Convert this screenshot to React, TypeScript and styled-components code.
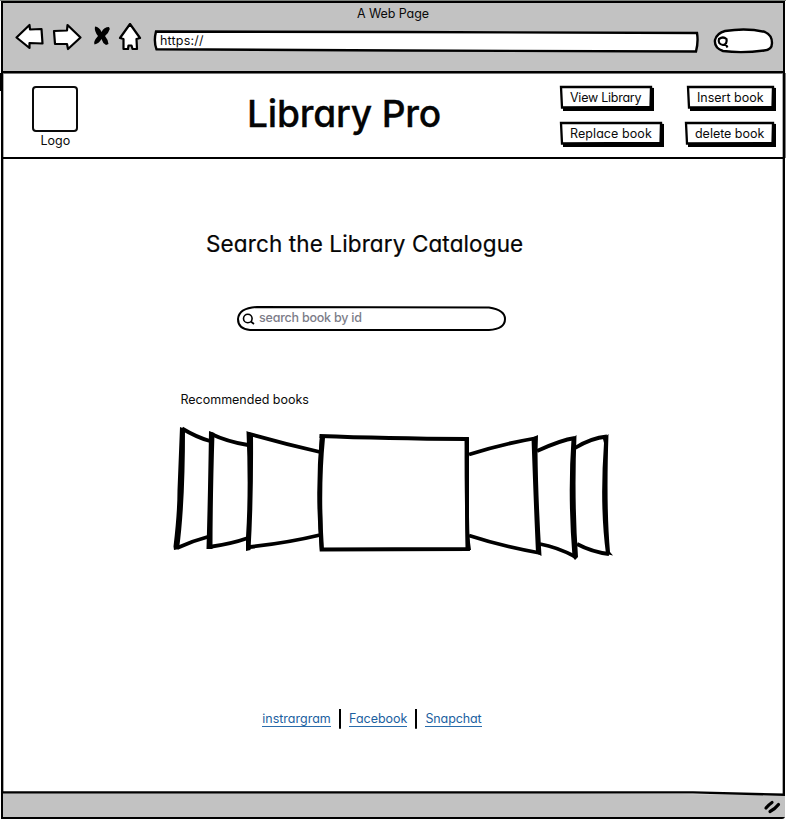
import React from 'react';
import styled, { createGlobalStyle } from 'styled-components';

const Global = createGlobalStyle`
  * { box-sizing: border-box; }
  body { margin: 0; background: #fff; }
  #root { font-family: Inter, 'Liberation Sans', sans-serif; font-feature-settings: 'cv11' 1; color: #0a0a0a; }
`;

const Screen = styled.div`
  width: 786px;
  height: 820px;
  padding: 1px;
  overflow: hidden;
  background: linear-gradient(#7d827d 1px, transparent 1px);
`;

const Window = styled.div`
  display: flex;
  flex-direction: column;
  width: 784px;
  height: 818px;
  border: 2px solid #000;
  border-radius: 0 0 3px 0;
  background: #fff;
  box-shadow: inset 0.5px 0 0 #555, inset -0.5px 0 0 #555;
`;

const Chrome = styled.header`
  height: 70px;
  background: #c2c2c2;
  border-bottom: 2px solid #000;
  box-shadow: 0 1px 0 #777;
`;

const Label = styled.span<{ $track?: number; $color?: string; $weight?: number }>`
  display: block;
  font-size: 12.5px;
  font-weight: ${p => p.$weight ?? 400};
  line-height: 15px;
  letter-spacing: ${p => p.$track ?? 0}px;
  color: ${p => p.$color ?? '#0a0a0a'};
  white-space: nowrap;
`;

const PageTitle = styled.div`
  display: flex;
  justify-content: center;
  height: 20px;
  padding-top: 3px;
`;

const Toolbar = styled.div`
  display: flex;
  align-items: flex-start;
  padding-left: 11px;
`;

const NavIcons = styled.svg`
  display: block;
  width: 130px;
  height: 34px;
  flex: none;
`;

const Sketched = styled.div<{ $w: number; $h: number }>`
  position: relative;
  width: ${p => p.$w}px;
  height: ${p => p.$h}px;
  flex: none;
`;

const Outline = styled.svg`
  position: absolute;
  inset: 0;
  width: 100%;
  height: 100%;
  overflow: visible;
`;

const Address = styled(Sketched)`
  margin: 6px 0 0 9px;
  padding: 4px 0 0 7px;
`;

const QuickSearch = styled(Sketched)`
  margin: 5px 0 0 13px;
`;

const Inner = styled.div`
  position: relative;
`;

const Header = styled.section`
  position: relative;
  display: flex;
  width: 782px;
  height: 86px;
  border-bottom: 2px solid #000;
`;

const HeaderEdges = styled.svg`
  position: absolute;
  left: -3px;
  top: -2px;
  width: 786px;
  height: 88px;
  pointer-events: none;
`;

const LogoBlock = styled.div`
  display: flex;
  flex-direction: column;
  align-items: center;
  width: 46px;
  margin: 13px 0 0 29.4px;
`;

const LogoBox = styled.div`
  width: 46px;
  height: 46px;
  margin-bottom: 1px;
  border: 2px solid #0a0a0a;
  border-radius: 4px;
`;

const Brand = styled.h1`
  width: 200px;
  margin: 18px 0 0 168.6px;
  font-size: 37.2px;
  font-weight: 500;
  line-height: 45px;
  letter-spacing: -0.2px;
  white-space: nowrap;
  color: #050505;
  -webkit-text-stroke: 0.3px #050505;
`;

const Actions = styled.nav`
  display: grid;
  grid-template-columns: 125px 93px;
  grid-template-rows: 36px 36px;
  margin: 12px 0 0 112px;
`;

const ActionButton = styled.button<{ $w: number; $shift: number }>`
  position: relative;
  width: ${p => p.$w}px;
  height: 26px;
  margin: 0 0 0 ${p => p.$shift}px;
  padding: 0 0 1px 11px;
  border: 0;
  background: none;
  font: inherit;
  text-align: left;
  display: block;
`;

const Content = styled.main`
  flex: 1;
  display: flex;
  flex-direction: column;
  align-items: flex-start;
`;

const Heading = styled.h2`
  margin: 71px 0 0 203px;
  font-size: 22.5px;
  font-weight: 400;
  line-height: 28px;
  letter-spacing: 0.12px;
  white-space: nowrap;
  color: #050505;
  -webkit-text-stroke: 0.2px #050505;
`;

const SearchField = styled(Sketched)`
  margin: 47px 0 0 233px;
  padding: 5px 0 0 23px;
`;

const Recommended = styled.div`
  margin: 61px 0 0 177.4px;
`;

const Carousel = styled.svg`
  display: block;
  width: 450px;
  height: 140px;
  margin: 13px 0 0 167px;
`;

const Links = styled.div`
  display: flex;
  align-items: flex-start;
  margin: 148px 0 0 259px;
`;

const Link = styled.a<{ $w: number; $track: number }>`
  width: ${p => p.$w}px;
  height: 16px;
  margin-top: 3px;
  font-size: 12.5px;
  line-height: 16px;
  letter-spacing: ${p => p.$track}px;
  color: #1c5f9f;
  border-bottom: 1px solid #2a6cab;
  text-align: center;
  white-space: nowrap;
  text-decoration: none;
`;

const Separator = styled.i`
  width: 2px;
  height: 20px;
  margin: 1px 8px 0;
  background: #000;
  border-radius: 0 0 1px 1px;
`;

const Footer = styled.footer`
  height: 26px;
`;

const FooterArt = styled.svg`
  display: block;
  width: 782px;
  height: 26px;
`;

function Action({ w, shift = 0, track, children }: { w: number; shift?: number; track: number; children: string }) {
  return (
    <ActionButton $w={w} $shift={shift}>
      <Outline>
        <path d={`M4 22 H${w - 4} V2.500 L${w} 3 V26 H4 Z`} fill="#000" />
        <path d={`M2 2 L${w - 3} 2 L${w - 3.5} 22 L3 22.5 Z`} fill="#fff" stroke="#000" strokeWidth="2.300" />
      </Outline>
      <Inner><Label $track={track}>{children}</Label></Inner>
    </ActionButton>
  );
}

export default function App() {
  return (
    <>
      <Global />
      <Screen>
        <Window>
          <Chrome>
            <PageTitle><Label $track={-0.1}>A Web Page</Label></PageTitle>
            <Toolbar>
              <NavIcons viewBox="14 23 130 34">
                <g fill="#fff" stroke="#000" strokeWidth="2.200" strokeLinejoin="round">
                  <path d="M16.5 37.5 L29.5 25 L30 29.5 L41.5 29 L42.5 43.5 L29.5 43 L29.5 48 Z" />
                  <path d="M54 31 L67 30.5 L67.5 25 L80.5 37.5 L68 49 L67 44 L55 44 Z" />
                  <path d="M130 24 L140 38 L136.5 39 L137 49 L132.5 49 L131.5 45.5 L128.5 45.5 L128 49 L123.5 49 L123.5 39 L120 38 Z" />
                </g>
                <path d="M95 26.500 Q99.500 27 101.500 32 Q104 27 109 27 L109.800 29 Q108.500 33.500 105 36 Q108 39.500 108.500 44 L106 45 Q102.500 43 101.500 39 Q99 43.500 94.500 44.500 Q93 41.500 98 36 Q94 31 95 26.500Z" fill="#000" />
              </NavIcons>
              <Address $w={545} $h={22}>
                <Outline viewBox="153 29 545 22">
                  <path d="M156 31.5 L400 32 L697 33 Q698.500 42 696 51.500 L400 50.500 L156.500 49.300 Q153.500 41 156 31.500Z" fill="#fff" stroke="#000" strokeWidth="2.400" />
                </Outline>
                <Inner><Label $track={0.2}>https://</Label></Inner>
              </Address>
              <QuickSearch $w={64} $h={28}>
                <Outline viewBox="711 28 64 28">
                  <path d="M725 31 Q747 27.500 765 32 Q772 35 772 43 Q772 50 764 50.500 Q742 53.500 723 51 Q714 48 715 40 Q717 33 725 31Z" fill="#fff" stroke="#000" strokeWidth="2.400" />
                  <path d="M719 39 Q723 36 726.500 39 Q727.500 44 723 45 Q717.500 44 719 39Z M725 43 L727.500 47.500" fill="none" stroke="#000" strokeWidth="2.200" />
                </Outline>
              </QuickSearch>
            </Toolbar>
          </Chrome>

          <Header>
            <HeaderEdges viewBox="0 71 786 88">
              <path d="M1 73 V91 M784.500 73 V158" fill="none" stroke="#000" strokeWidth="2" />
            </HeaderEdges>
            <LogoBlock>
              <LogoBox />
              <Label $track={0.05}>Logo</Label>
            </LogoBlock>
            <Brand>Library Pro</Brand>
            <Actions>
              <Action w={95} track={-0.25}>View Library</Action>
              <Action w={90} shift={2} track={0}>Insert book</Action>
              <Action w={105} track={0.08}>Replace book</Action>
              <Action w={92} track={-0.02}>delete book</Action>
            </Actions>
          </Header>

          <Content>
            <Heading>Search the Library Catalogue</Heading>
            <SearchField $w={271} $h={26}>
              <Outline viewBox="236 305 271 26">
                <path d="M257 307 L489 307.500 Q505 310 505 319 Q505 329 489 330 L250 330 Q238 329 238 319 Q239 308 257 307Z" fill="#fff" stroke="#000" strokeWidth="2" />
                <circle cx="247.800" cy="318.500" r="4.300" fill="none" stroke="#000" strokeWidth="1.600" />
                <path d="M250.800 321.500 L254 324" stroke="#000" strokeWidth="1.700" />
              </Outline>
              <Inner><Label $color="#7c7c88" $track={-0.22} $weight={500}>search book by id</Label></Inner>
            </SearchField>
            <Recommended><Label>Recommended books</Label></Recommended>
            <Carousel viewBox="170 420 450 140">
              <g fill="none" stroke="#000" strokeWidth="3.800">
                <path d="M182 428.500 Q197 437.500 210 441 M177 548 Q192 541 209 536.500" />
                <path d="M210 433.500 Q228 442 248 445 M209 547 Q231 544 248 538" />
                <path d="M248 433.500 Q285 444 320 452 M249 547 Q287 543 320 535" />
                <path d="M469 454.500 Q502 444 537 438 M469 535.500 Q501 546 540 553" />
                <path d="M537 451 Q561 440 575 438 M540 544 Q557 547 576 557" />
                <path d="M575 448 Q591 438 607 436.500 M577 544 Q592 552 609 554" />
              </g>
              <g fill="#000">
                <path d="M180 427 L185 429 Q185 505 179 549 L174 550 L173.500 546.500 Q177.500 513 177.500 490Z" />
                <path d="M209 431 L214.500 433 Q212.500 499 212.500 549 L206.500 549 Q208 498 209 431Z" />
                <path d="M246.500 431 L253 434 Q253.500 499 250.500 550 L246 551 L246 537 Q249 490 246.500 431Z" />
                <path d="M531.500 438 L538 435 L537.500 452 Q538 499 541.500 556 L536 553 Q534 510 531.500 438Z" />
                <path d="M571.500 439 L576.500 435 Q574 499 578 557 L575 560 L572.500 557 Q567.500 495 571.500 439Z" />
                <path d="M603 439 L608.500 434 Q606 506 610 552 L613 555.500 L606 554 Q599.500 506 604 443Z" />
              </g>
              <path d="M319.500 436 Q385 438.500 467 439 Q466 495 468 549 L321.500 549.500 Q318 488 322 436" fill="#fff" stroke="#000" strokeWidth="3.800" />
              <path d="M320 434 Q314.500 494 320 550.500 H324 Q320 490 325 438Z M464.500 438 H469 V535 L471 550 H465.500Z" fill="#000" />
            </Carousel>
            <Links>
              <Link $w={69} $track={0}>instrargram</Link><Separator />
              <Link $w={58} $track={0}>Facebook</Link><Separator />
              <Link $w={57} $track={-0.1}>Snapchat</Link>
            </Links>
          </Content>

          <Footer>
            <FooterArt viewBox="3 791 782 26">
              <path d="M2 792 L480 792.300 L786 795 V818 H2Z" fill="#c2c2c2" />
              <path d="M2 792.400 L693 792.400 L785 794.700" fill="none" stroke="#000" strokeWidth="2.400" />
              <path d="M766 808 Q769 804.500 772 802.500 M770 811.500 Q775 809 778.500 804.500" fill="none" stroke="#000" strokeWidth="3.200" strokeLinecap="round" />
            </FooterArt>
          </Footer>
        </Window>
      </Screen>
    </>
  );
}
